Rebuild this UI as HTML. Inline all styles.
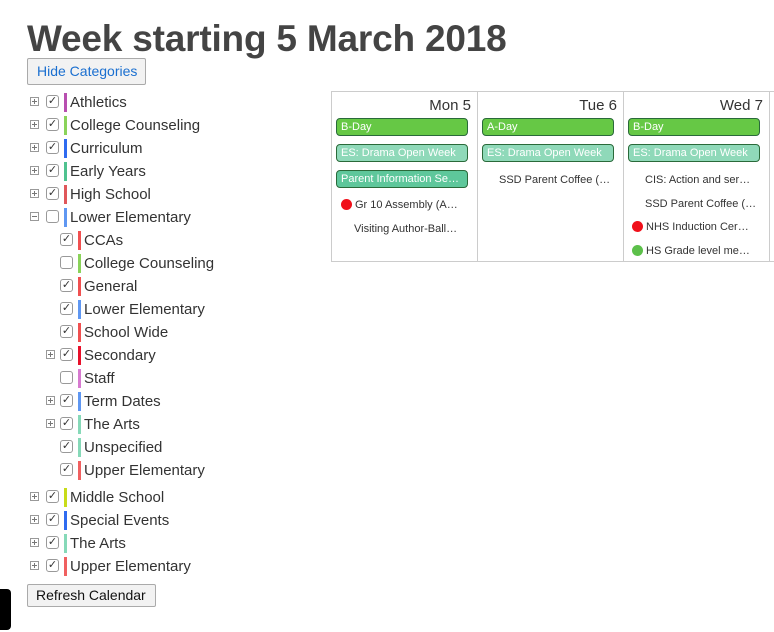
<!DOCTYPE html>
<html><head><style>
body{margin:0;width:774px;height:632px;background:#fff;font-family:"Liberation Sans",sans-serif;color:#333;position:relative;overflow:hidden}
.a{position:absolute}
h1{position:absolute;left:27px;top:18px;margin:0;font-size:37px;font-weight:bold;color:#444;letter-spacing:-0.2px;white-space:nowrap}
.btn{position:absolute;background:#f2f2f2;border:1px solid #aaa;border-radius:2px;font-size:14px;box-sizing:border-box;white-space:nowrap}
.row{position:absolute;height:20px;font-size:15px;white-space:nowrap}
.pl{position:absolute;width:9px;height:9px;border:1px solid #999;top:4px;box-sizing:border-box}
.pl:before{content:"";position:absolute;left:1px;top:3px;width:5px;height:1px;background:#777}
.pl.p:after{content:"";position:absolute;left:3px;top:1px;width:1px;height:5px;background:#777}
.cb{position:absolute;width:13px;height:13px;border:1px solid #999;border-radius:3px;top:2px;box-sizing:border-box;background:#fff;font-size:11px;line-height:11px;text-align:center;color:#333}
.bar{position:absolute;width:3px;height:19px;top:0}
.lb{position:absolute;top:0;line-height:19px;color:#333}
.cal{position:absolute;left:331px;top:91px;width:445px;height:171px;border:1px solid #ccc;box-sizing:border-box}
.col{position:absolute;top:0;height:169px;border-right:1px solid #ccc}
.dh{position:absolute;right:6px;top:5px;font-size:15px;color:#333}
.ev{position:absolute;left:4px;width:132px;height:18px;border-radius:4px;border:1px solid #2a6a3a;box-sizing:border-box;color:#fff;font-size:11px;line-height:16px;padding-left:4px;white-space:nowrap;overflow:hidden}
.g{background:#66c845}.t{background:#8fd9b9}.t2{background:#5ec79b}
.tx{position:absolute;font-size:11px;white-space:nowrap;color:#333}
.dot{display:inline-block;width:11px;height:11px;border-radius:50%;vertical-align:-2px;margin-right:3px}
</style></head><body>
<h1>Week starting 5 March 2018</h1>
<div class="btn" style="left:27px;top:58px;width:119px;height:27px;color:#1a6fd0;padding:4px 0 0 9px">Hide Categories</div>

<div class="row" style="left:0;top:93px;width:300px">
<div class="pl p" style="left:30px"></div><div class="cb" style="left:46px">✓</div><div class="bar" style="left:64px;background:#b84fb0"></div><div class="lb" style="left:70px">Athletics</div></div>
<div class="row" style="left:0;top:116px;width:300px">
<div class="pl p" style="left:30px"></div><div class="cb" style="left:46px">✓</div><div class="bar" style="left:64px;background:#8ad35a"></div><div class="lb" style="left:70px">College Counseling</div></div>
<div class="row" style="left:0;top:139px;width:300px">
<div class="pl p" style="left:30px"></div><div class="cb" style="left:46px">✓</div><div class="bar" style="left:64px;background:#2f6bf0"></div><div class="lb" style="left:70px">Curriculum</div></div>
<div class="row" style="left:0;top:162px;width:300px">
<div class="pl p" style="left:30px"></div><div class="cb" style="left:46px">✓</div><div class="bar" style="left:64px;background:#4fc28f"></div><div class="lb" style="left:70px">Early Years</div></div>
<div class="row" style="left:0;top:185px;width:300px">
<div class="pl p" style="left:30px"></div><div class="cb" style="left:46px">✓</div><div class="bar" style="left:64px;background:#e0575a"></div><div class="lb" style="left:70px">High School</div></div>
<div class="row" style="left:0;top:208px;width:300px">
<div class="pl" style="left:30px"></div><div class="cb" style="left:46px"></div><div class="bar" style="left:64px;background:#5f97f2"></div><div class="lb" style="left:70px">Lower Elementary</div></div>

<div class="row" style="left:0;top:231px;width:300px"><div class="cb" style="left:60px">✓</div><div class="bar" style="left:78px;background:#f05050"></div><div class="lb" style="left:84px">CCAs</div></div>
<div class="row" style="left:0;top:254px;width:300px"><div class="cb" style="left:60px"></div><div class="bar" style="left:78px;background:#8ad35a"></div><div class="lb" style="left:84px">College Counseling</div></div>
<div class="row" style="left:0;top:277px;width:300px"><div class="cb" style="left:60px">✓</div><div class="bar" style="left:78px;background:#f05050"></div><div class="lb" style="left:84px">General</div></div>
<div class="row" style="left:0;top:300px;width:300px"><div class="cb" style="left:60px">✓</div><div class="bar" style="left:78px;background:#5f97f2"></div><div class="lb" style="left:84px">Lower Elementary</div></div>
<div class="row" style="left:0;top:323px;width:300px"><div class="cb" style="left:60px">✓</div><div class="bar" style="left:78px;background:#f05050"></div><div class="lb" style="left:84px">School Wide</div></div>
<div class="row" style="left:0;top:346px;width:300px"><div class="pl p" style="left:46px"></div><div class="cb" style="left:60px">✓</div><div class="bar" style="left:78px;background:#e8102a"></div><div class="lb" style="left:84px">Secondary</div></div>
<div class="row" style="left:0;top:369px;width:300px"><div class="cb" style="left:60px"></div><div class="bar" style="left:78px;background:#d77ad0"></div><div class="lb" style="left:84px">Staff</div></div>
<div class="row" style="left:0;top:392px;width:300px"><div class="pl p" style="left:46px"></div><div class="cb" style="left:60px">✓</div><div class="bar" style="left:78px;background:#5f97f2"></div><div class="lb" style="left:84px">Term Dates</div></div>
<div class="row" style="left:0;top:415px;width:300px"><div class="pl p" style="left:46px"></div><div class="cb" style="left:60px">✓</div><div class="bar" style="left:78px;background:#86d9b8"></div><div class="lb" style="left:84px">The Arts</div></div>
<div class="row" style="left:0;top:438px;width:300px"><div class="cb" style="left:60px">✓</div><div class="bar" style="left:78px;background:#86d9b8"></div><div class="lb" style="left:84px">Unspecified</div></div>
<div class="row" style="left:0;top:461px;width:300px"><div class="cb" style="left:60px">✓</div><div class="bar" style="left:78px;background:#f06060"></div><div class="lb" style="left:84px">Upper Elementary</div></div>

<div class="row" style="left:0;top:488px;width:300px">
<div class="pl p" style="left:30px"></div><div class="cb" style="left:46px">✓</div><div class="bar" style="left:64px;background:#c8dc1a"></div><div class="lb" style="left:70px">Middle School</div></div>
<div class="row" style="left:0;top:511px;width:300px">
<div class="pl p" style="left:30px"></div><div class="cb" style="left:46px">✓</div><div class="bar" style="left:64px;background:#2f6bf0"></div><div class="lb" style="left:70px">Special Events</div></div>
<div class="row" style="left:0;top:534px;width:300px">
<div class="pl p" style="left:30px"></div><div class="cb" style="left:46px">✓</div><div class="bar" style="left:64px;background:#86d9b8"></div><div class="lb" style="left:70px">The Arts</div></div>
<div class="row" style="left:0;top:557px;width:300px">
<div class="pl p" style="left:30px"></div><div class="cb" style="left:46px">✓</div><div class="bar" style="left:64px;background:#f06060"></div><div class="lb" style="left:70px">Upper Elementary</div></div>

<div class="btn" style="left:27px;top:584px;width:129px;height:23px;color:#111;padding:2px 0 0 8px">Refresh Calendar</div>
<div class="a" style="left:0;top:589px;width:11px;height:41px;background:#000;border-radius:0 4px 4px 0"></div>

<div class="cal">
<div class="col" style="left:0;width:145px">
<div class="dh">Mon 5</div>
<div class="ev g" style="top:26px">B-Day</div>
<div class="ev t" style="top:52px">ES: Drama Open Week</div>
<div class="ev t2" style="top:78px">Parent Information Se…</div>
<div class="tx" style="left:9px;top:107px"><span class="dot" style="background:#f0101a"></span>Gr 10 Assembly (A…</div>
<div class="tx" style="left:22px;top:131px">Visiting Author-Ball…</div>
</div>
<div class="col" style="left:146px;width:145px">
<div class="dh">Tue 6</div>
<div class="ev g" style="top:26px">A-Day</div>
<div class="ev t" style="top:52px">ES: Drama Open Week</div>
<div class="tx" style="left:21px;top:82px">SSD Parent Coffee (…</div>
</div>
<div class="col" style="left:292px;width:145px">
<div class="dh">Wed 7</div>
<div class="ev g" style="top:26px">B-Day</div>
<div class="ev t" style="top:52px">ES: Drama Open Week</div>
<div class="tx" style="left:21px;top:82px">CIS: Action and ser…</div>
<div class="tx" style="left:21px;top:106px">SSD Parent Coffee (…</div>
<div class="tx" style="left:8px;top:129px"><span class="dot" style="background:#f0101a"></span>NHS Induction Cer…</div>
<div class="tx" style="left:8px;top:153px"><span class="dot" style="background:#5cc04a"></span>HS Grade level me…</div>
</div>
</div>
</body></html>
